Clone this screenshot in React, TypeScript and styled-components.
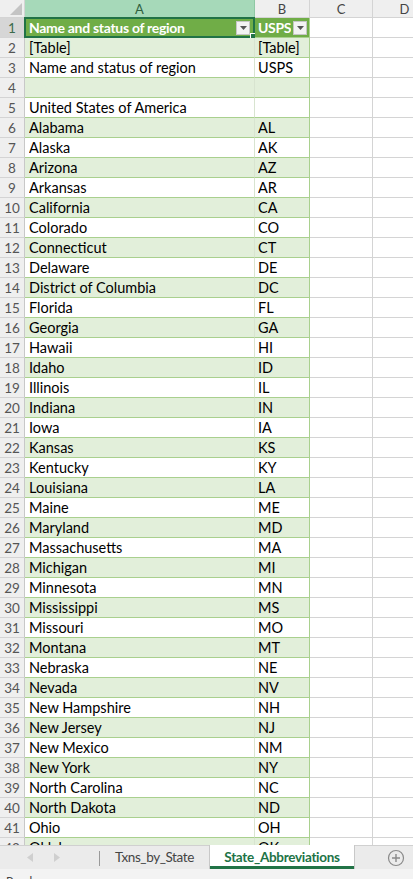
import styled, { createGlobalStyle } from 'styled-components';

const GlobalStyle = createGlobalStyle`
  html, body {
    margin: 0;
    padding: 0;
    background: #ffffff;
    overflow: hidden;
  }
  * {
    box-sizing: border-box;
  }
`;

const columns = ['A', 'B', 'C', 'D'];

const rows: [string, string][] = [
  ['Name and status of region', 'USPS'],
  ['[Table]', '[Table]'],
  ['Name and status of region', 'USPS'],
  ['', ''],
  ['United States of America', ''],
  ['Alabama', 'AL'],
  ['Alaska', 'AK'],
  ['Arizona', 'AZ'],
  ['Arkansas', 'AR'],
  ['California', 'CA'],
  ['Colorado', 'CO'],
  ['Connecticut', 'CT'],
  ['Delaware', 'DE'],
  ['District of Columbia', 'DC'],
  ['Florida', 'FL'],
  ['Georgia', 'GA'],
  ['Hawaii', 'HI'],
  ['Idaho', 'ID'],
  ['Illinois', 'IL'],
  ['Indiana', 'IN'],
  ['Iowa', 'IA'],
  ['Kansas', 'KS'],
  ['Kentucky', 'KY'],
  ['Louisiana', 'LA'],
  ['Maine', 'ME'],
  ['Maryland', 'MD'],
  ['Massachusetts', 'MA'],
  ['Michigan', 'MI'],
  ['Minnesota', 'MN'],
  ['Mississippi', 'MS'],
  ['Missouri', 'MO'],
  ['Montana', 'MT'],
  ['Nebraska', 'NE'],
  ['Nevada', 'NV'],
  ['New Hampshire', 'NH'],
  ['New Jersey', 'NJ'],
  ['New Mexico', 'NM'],
  ['New York', 'NY'],
  ['North Carolina', 'NC'],
  ['North Dakota', 'ND'],
  ['Ohio', 'OH'],
  ['Oklahoma', 'OK'],
];

function DropButton() {
  return (
    <Drop>
      <svg width="7" height="4" viewBox="0 0 7 4">
        <path d="M0 0 L7 0 L3.5 4 Z" fill="#555" />
      </svg>
    </Drop>
  );
}

function App() {
  return (
    <>
      <GlobalStyle />
      <Window>
        <Sheet>
          <HeaderRow>
            <Corner>
              <svg width="12" height="12" viewBox="0 0 12 12">
                <path d="M12 0 L12 12 L0 12 Z" fill="#c4c4c4" />
              </svg>
            </Corner>
            {columns.map((c) => (
              <ColHead key={c} selected={c === 'A'}>
                {c}
              </ColHead>
            ))}
          </HeaderRow>
          {rows.map(([a, b], i) => {
            const n = i + 1;
            const isHead = n === 1;
            const banded = n % 2 === 0;
            return (
              <Row key={n}>
                <RowHead selected={isHead}>{n}</RowHead>
                <TableCell head={isHead} banded={banded} first>
                  <CellText>{a}</CellText>
                  {isHead && <DropButton />}
                  {isHead && <Selection />}
                </TableCell>
                <TableCell head={isHead} banded={banded} edge>
                  <CellText>{b}</CellText>
                  {isHead && <DropButton />}
                </TableCell>
                <Cell />
                <Cell />
              </Row>
            );
          })}
        </Sheet>
        <TabBar>
          <Nav>
            <svg width="6" height="9" viewBox="0 0 6 9">
              <path d="M6 0 L6 9 L0 4.5 Z" fill="#cfcfcf" />
            </svg>
            <svg width="6" height="9" viewBox="0 0 6 9">
              <path d="M0 0 L0 9 L6 4.5 Z" fill="#cfcfcf" />
            </svg>
          </Nav>
          <Divider />
          <Tab width={109}>Txns_by_State</Tab>
          <Tab width={146} active>
            State_Abbreviations
          </Tab>
          <Spacer />
          <AddSheet>
            <svg width="18" height="18" viewBox="0 0 18 18">
              <circle cx="9" cy="9" r="7.5" fill="none" stroke="#8a8a8a" strokeWidth="1.2" />
              <path d="M9 5 V13 M5 9 H13" stroke="#8a8a8a" strokeWidth="1.4" />
            </svg>
          </AddSheet>
        </TabBar>
        <StatusBar>
          <StatusText>Ready</StatusText>
          <svg width="14" height="10" viewBox="0 0 14 10">
            <rect x="1" y="4" width="5" height="5" fill="#6a6a6a" />
            <rect x="8" y="4" width="5" height="5" fill="#6a6a6a" />
          </svg>
        </StatusBar>
      </Window>
    </>
  );
}

export default App;

const Window = styled.div`
  width: 413px;
  height: 879px;
  display: flex;
  flex-direction: column;
  overflow: hidden;
  font-family: 'Lato', 'Open Sans', sans-serif;
  background: #ffffff;
`;

const Sheet = styled.div`
  height: 845px;
  overflow: hidden;
  flex-shrink: 0;
`;

const HeaderRow = styled.div`
  display: grid;
  grid-template-columns: 25px 230px 55px 63px 64px;
  height: 18px;
  background: #efefef;
`;

const Corner = styled.div`
  display: flex;
  align-items: flex-end;
  justify-content: flex-end;
  padding: 0 2px 2px 0;
  border-right: 1px solid #d4d4d4;
  border-bottom: 1px solid #d4d4d4;
`;

const ColHead = styled.div<{ selected?: boolean }>`
  display: flex;
  align-items: center;
  justify-content: center;
  font-size: 13px;
  color: ${(p) => (p.selected ? '#2f5f3f' : '#444')};
  background: ${(p) => (p.selected ? '#a6d9b9' : '#efefef')};
  border-right: 1px solid ${(p) => (p.selected ? '#8fc8a4' : '#d4d4d4')};
  border-bottom: 1px solid ${(p) => (p.selected ? '#8cc3a0' : '#d4d4d4')};
`;

const Row = styled.div`
  display: grid;
  grid-template-columns: 25px 230px 55px 63px 64px;
  height: 20px;
`;

const RowHead = styled.div<{ selected?: boolean }>`
  display: flex;
  align-items: center;
  justify-content: center;
  font-size: 13.5px;
  color: ${(p) => (p.selected ? '#3d6b4c' : '#555')};
  background: ${(p) => (p.selected ? '#d6d6d6' : '#efefef')};
  border-right: 1px solid #c8c8c8;
  border-bottom: 1px solid #d4d4d4;
`;

const TableCell = styled.div<{
  head?: boolean;
  banded?: boolean;
  first?: boolean;
  edge?: boolean;
}>`
  position: relative;
  display: flex;
  align-items: center;
  gap: 2px;
  padding: 0 ${(p) => (p.first ? '4px' : '2px')} 0 ${(p) => (p.first ? '4px' : '3px')};
  font-size: ${(p) => (p.head ? '14px' : '14.5px')};
  font-weight: ${(p) => (p.head ? 700 : 400)};
  letter-spacing: ${(p) => (p.head ? '-0.3px' : '0')};
  color: ${(p) => (p.head ? '#ffffff' : '#000')};
  background: ${(p) => (p.head ? '#70ad47' : p.banded ? '#e2efda' : '#ffffff')};
  border-bottom: 1px solid #a9d08e;
  border-right: 1px solid ${(p) => (p.edge ? '#a9d08e' : '#d8e4d0')};
  white-space: nowrap;
`;

const CellText = styled.span`
  flex: 1;
  overflow: hidden;
`;

const Drop = styled.div`
  width: 14px;
  height: 14px;
  flex-shrink: 0;
  display: flex;
  align-items: center;
  justify-content: center;
  background: #f3f3f3;
  border: 1px solid #c6c6c6;
`;

const Selection = styled.div`
  position: absolute;
  inset: -1px -1px -1px -1px;
  border: 2px solid #217346;
  pointer-events: none;

  &::after {
    content: '';
    position: absolute;
    right: -4px;
    bottom: -4px;
    width: 5px;
    height: 5px;
    background: #217346;
    border: 1px solid #ffffff;
  }
`;

const Cell = styled.div`
  border-right: 1px solid #d4d4d4;
  border-bottom: 1px solid #d4d4d4;
`;

const TabBar = styled.div`
  height: 24px;
  flex-shrink: 0;
  display: flex;
  align-items: stretch;
  background: #ebebeb;
  border-top: 1px solid #d0d0d0;
  font-size: 13.5px;
`;

const Nav = styled.div`
  width: 99px;
  display: flex;
  align-items: center;
  justify-content: center;
  gap: 21px;
  padding-right: 12px;
`;

const Divider = styled.div`
  width: 1px;
  margin: 5px 0 3px;
  background: #9a9a9a;
`;

const Tab = styled.div<{ active?: boolean; width: number }>`
  width: ${(p) => p.width}px;
  display: flex;
  align-items: center;
  justify-content: center;
  color: ${(p) => (p.active ? '#217346' : '#444')};
  font-weight: ${(p) => (p.active ? 700 : 400)};
  letter-spacing: ${(p) => (p.active ? '-0.3px' : '-0.4px')};
  background: ${(p) => (p.active ? '#ffffff' : 'transparent')};
  border-left: ${(p) => (p.active ? '1px solid #c8c8c8' : 'none')};
  border-right: ${(p) => (p.active ? '1px solid #c8c8c8' : 'none')};
  box-shadow: ${(p) => (p.active ? 'inset 0 -3px 0 #217346' : 'none')};
  margin-top: -1px;
  white-space: nowrap;
`;

const Spacer = styled.div`
  flex: 1;
`;

const AddSheet = styled.div`
  width: 34px;
  display: flex;
  align-items: center;
  justify-content: center;
`;

const StatusBar = styled.div`
  flex: 1;
  display: flex;
  align-items: flex-start;
  gap: 28px;
  padding: 6px 0 0 6px;
  background: #f3f3f3;
  overflow: hidden;
`;

const StatusText = styled.span`
  font-size: 12px;
  color: #444;
  line-height: 12px;
`;
